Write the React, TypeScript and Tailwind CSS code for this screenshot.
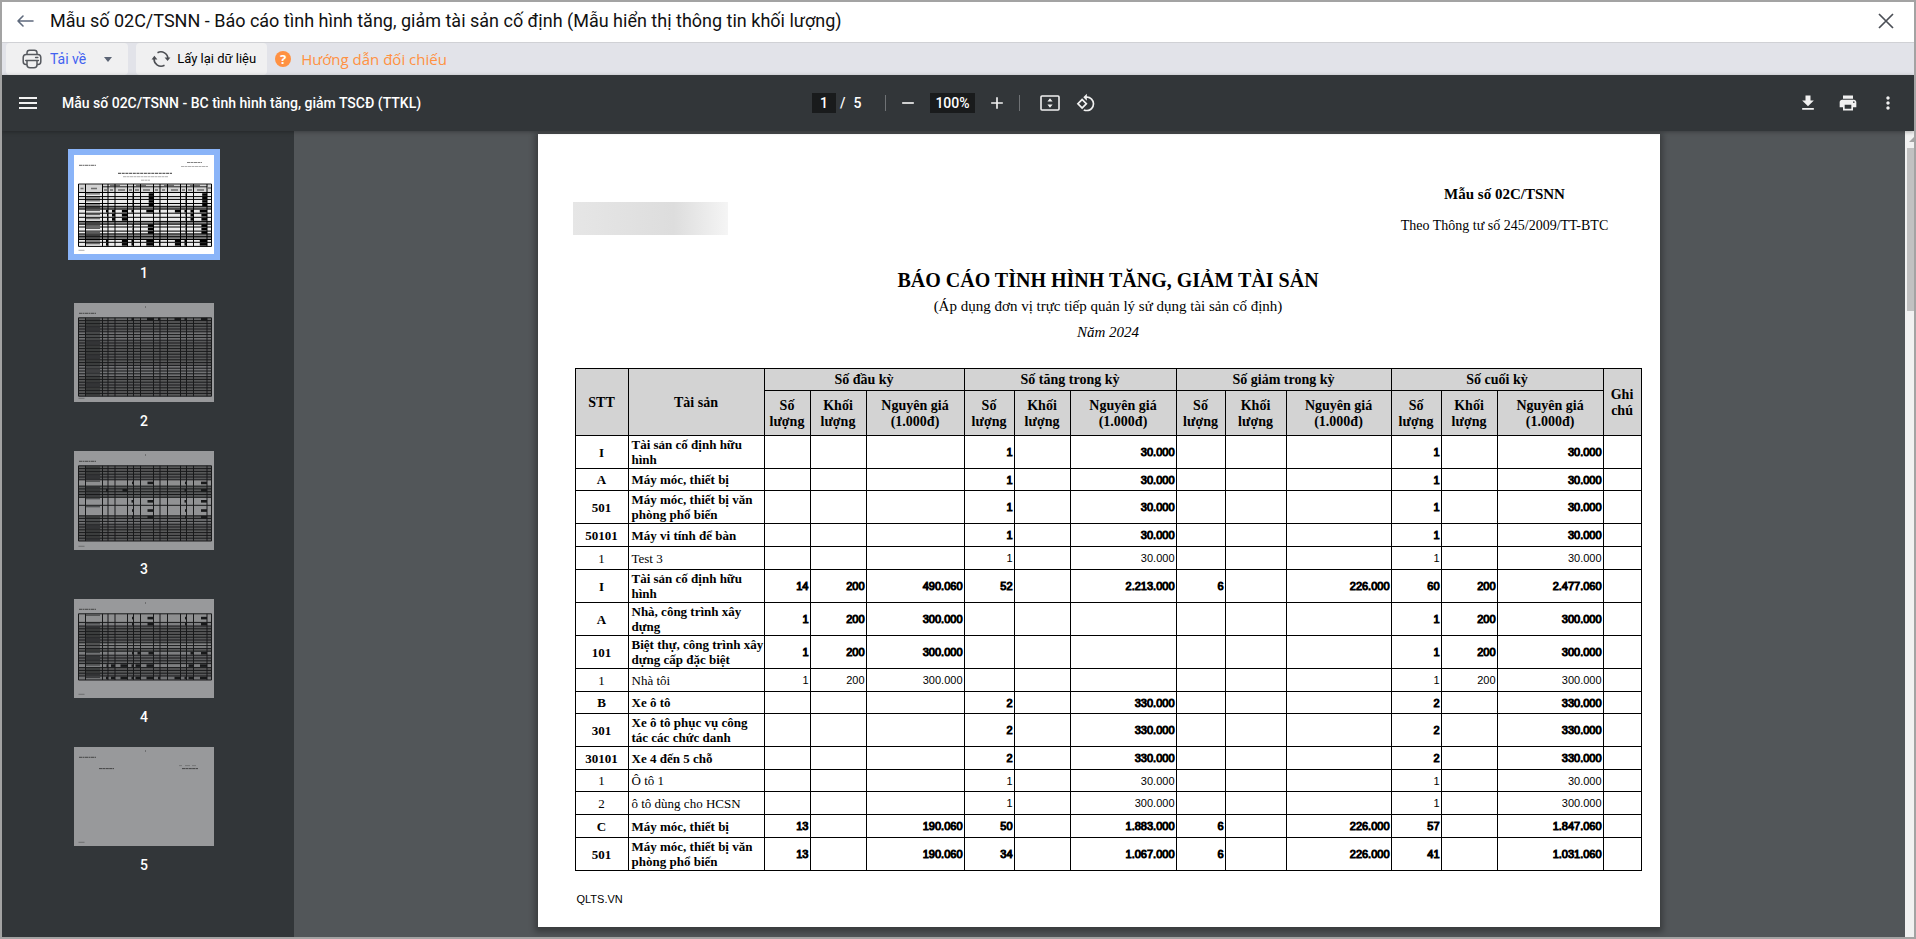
import {
  MdAdd,
  MdDownload,
  MdMenu,
  MdMoreVert,
  MdPrint,
  MdRemove,
  MdRotate90DegreesCcw,
} from 'react-icons/md';
import clsx from 'clsx';

interface AssetRow {
  code: string;
  name: string;
  bold?: boolean;
  size: 'sm' | 'md' | 'lg';
  // opening, increase, decrease, closing: quantity / volume / cost
  values: string[];
}

const GROUPS = ['Số đầu kỳ', 'Số tăng trong kỳ', 'Số giảm trong kỳ', 'Số cuối kỳ'];

const ROWS: AssetRow[] = [
  { code: 'I', name: 'Tài sản cố định hữu hình', bold: true, size: 'lg', values: ['', '', '', '1', '', '30.000', '', '', '', '1', '', '30.000'] },
  { code: 'A', name: 'Máy móc, thiết bị', bold: true, size: 'sm', values: ['', '', '', '1', '', '30.000', '', '', '', '1', '', '30.000'] },
  { code: '501', name: 'Máy móc, thiết bị văn phòng phổ biến', bold: true, size: 'lg', values: ['', '', '', '1', '', '30.000', '', '', '', '1', '', '30.000'] },
  { code: '50101', name: 'Máy vi tính để bàn', bold: true, size: 'md', values: ['', '', '', '1', '', '30.000', '', '', '', '1', '', '30.000'] },
  { code: '1', name: 'Test 3', size: 'md', values: ['', '', '', '1', '', '30.000', '', '', '', '1', '', '30.000'] },
  { code: 'I', name: 'Tài sản cố định hữu hình', bold: true, size: 'lg', values: ['14', '200', '490.060', '52', '', '2.213.000', '6', '', '226.000', '60', '200', '2.477.060'] },
  { code: 'A', name: 'Nhà, công trình xây dựng', bold: true, size: 'lg', values: ['1', '200', '300.000', '', '', '', '', '', '', '1', '200', '300.000'] },
  { code: '101', name: 'Biệt thự, công trình xây dựng cấp đặc biệt', bold: true, size: 'lg', values: ['1', '200', '300.000', '', '', '', '', '', '', '1', '200', '300.000'] },
  { code: '1', name: 'Nhà tôi', size: 'md', values: ['1', '200', '300.000', '', '', '', '', '', '', '1', '200', '300.000'] },
  { code: 'B', name: 'Xe ô tô', bold: true, size: 'sm', values: ['', '', '', '2', '', '330.000', '', '', '', '2', '', '330.000'] },
  { code: '301', name: 'Xe ô tô phục vụ công tác các chức danh', bold: true, size: 'lg', values: ['', '', '', '2', '', '330.000', '', '', '', '2', '', '330.000'] },
  { code: '30101', name: 'Xe 4 đến 5 chỗ', bold: true, size: 'md', values: ['', '', '', '2', '', '330.000', '', '', '', '2', '', '330.000'] },
  { code: '1', name: 'Ô tô 1', size: 'sm', values: ['', '', '', '1', '', '30.000', '', '', '', '1', '', '30.000'] },
  { code: '2', name: 'ô tô dùng cho HCSN', size: 'md', values: ['', '', '', '1', '', '300.000', '', '', '', '1', '', '300.000'] },
  { code: 'C', name: 'Máy móc, thiết bị', bold: true, size: 'md', values: ['13', '', '190.060', '50', '', '1.883.000', '6', '', '226.000', '57', '', '1.847.060'] },
  { code: '501', name: 'Máy móc, thiết bị văn phòng phổ biến', bold: true, size: 'lg', values: ['13', '', '190.060', '34', '', '1.067.000', '6', '', '226.000', '41', '', '1.031.060'] },
];

const ROW_HEIGHT = { sm: 'h-[22px]', md: 'h-[23px]', lg: 'h-[33px]' };

function BackIcon() {
  return (
    <svg viewBox="0 0 18 14" className="w-[18px] h-[14px]" fill="none" stroke="#5f6a7d" strokeWidth="1.6">
      <path d="M17 7H2M7 2L2 7l5 5" strokeLinecap="round" strokeLinejoin="round" />
    </svg>
  );
}

function CloseIcon() {
  return (
    <svg viewBox="0 0 16 16" className="size-4" fill="none" stroke="#4b4f56" strokeWidth="1.7">
      <path d="M1 1l14 14M15 1L1 15" />
    </svg>
  );
}

function PrinterIcon() {
  return (
    <svg viewBox="0 0 20 20" className="size-5" fill="none" stroke="#55585e" strokeWidth="1.5" strokeLinejoin="round">
      <path d="M5 5.5V3.8Q5 1.2 7.6 1.2h4.8Q15 1.2 15 3.8v1.7" />
      <path d="M5 15.5H4Q1.2 15.5 1.2 12.5V8.6Q1.2 5.5 4.2 5.5h11.6Q18.8 5.5 18.8 8.6v3.9q0 3-2.8 3h-1" />
      <path d="M3.8 11.5h12.6M13.6 8.5h2.2" strokeLinecap="round" />
      <path d="M5 11.5v4.3Q5 18.8 8 18.8h4q3 0 3-3v-4.3" />
    </svg>
  );
}

function ReloadIcon() {
  return (
    <svg viewBox="0 0 20 18" className="w-5 h-[18px]" fill="none" stroke="#4b4d52" strokeWidth="1.6">
      <path d="M6.5 2.7A7 7 0 0 1 16.9 9" />
      <path d="M13.5 15.3A7 7 0 0 1 3.1 8.6" />
      <path d="M13.6 7.6h5.8L16.6 11z" fill="#4b4d52" stroke="none" />
      <path d="M.6 9.6h5.8L3.4 5.8z" fill="#4b4d52" stroke="none" />
    </svg>
  );
}

function FitPageIcon() {
  return (
    <svg viewBox="0 0 20 16" className="w-5 h-4">
      <rect x="1" y="1" width="18" height="14" rx="1" fill="none" stroke="#f1f1f1" strokeWidth="1.6" />
      <path d="M10 3.2l2.6 3.2H7.4zM10 12.8l2.6-3.2H7.4z" fill="#f1f1f1" />
    </svg>
  );
}

// Column lines of the report table at thumbnail scale
const THUMB_COLS = [4.5, 11.5, 28.5, 34, 41, 53.5, 59.5, 66.5, 79.5, 86, 93.5, 106.5, 112.5, 119.5, 133, 137.5];

interface ThumbRow {
  h: number;
  shade: number;
  // [column index, width]
  marks?: number[][];
}

const line = (count: number, shade = 0.45): ThumbRow[] => Array.from({ length: count }, () => ({ h: 2.8, shade }));

const FIRST_PAGE: ThumbRow[] = ROWS.map((row) => ({
  h: row.size === 'lg' ? 4.1 : 2.8,
  shade: row.bold ? 0.08 : 0.5,
  marks: row.bold
    ? row.values.map((v, i) => [i + 3, v.length > 3 ? v.length * 0.8 : v.length]).filter((m) => m[1] > 0)
    : [],
}));

const PAGES: { top: number; rows: ThumbRow[] }[] = [
  { top: 37.5, rows: FIRST_PAGE },
  {
    top: 14.8,
    rows: [
      { h: 2.8, shade: 0.4, marks: [[6, 2], [8, 6.5], [9, 2], [11, 6], [12, 2], [14, 6]] },
      ...line(4, 0.5), ...line(3, 0.3), ...line(9, 0.5), ...line(4, 0.3), ...line(7, 0.5),
    ],
  },
  {
    top: 14.8,
    rows: [
      ...line(5, 0.5),
      { h: 6.3, shade: 0.08, marks: [[6, 1.5], [8, 6], [12, 1.5], [14, 6]] },
      ...line(1, 0.5),
      { h: 2.8, shade: 0.5, marks: [[3, 2], [5, 5], [12, 2], [14, 6]] },
      ...line(2, 0.5),
      { h: 8, shade: 0.05, marks: [[6, 2], [8, 6], [12, 2], [14, 6]] },
      { h: 10.5, shade: 0.05, marks: [[6, 1.5], [8, 6], [12, 1.5], [14, 6]] },
      { h: 2.8, shade: 0.5, marks: [[6, 1.5], [8, 6], [12, 1.5], [14, 6]] },
      ...line(2, 0.3), ...line(6, 0.5),
    ],
  },
  {
    top: 14.8,
    rows: [
      { h: 8.6, shade: 0.08, marks: [[6, 1.5], [8, 6], [12, 1.5], [14, 6]] },
      { h: 3.6, shade: 0.2, marks: [[6, 1.5], [8, 6], [12, 1.5], [14, 6]] },
      ...line(6, 0.5), ...line(2, 0.15), ...line(1, 0.5),
      { h: 4, shade: 0.2, marks: [[6, 1.5], [7, 3], [8, 5], [13, 3], [14, 6]] },
      ...line(3, 0.45),
      { h: 4, shade: 0.2, marks: [[3, 1.5], [4, 4], [5, 7], [6, 2], [7, 5], [8, 7], [13, 5], [14, 7]] },
      ...line(3, 0.5),
      { h: 4, shade: 0.3, marks: [[3, 2], [4, 4], [5, 7], [6, 2], [7, 5], [8, 7], [9, 2], [11, 6], [12, 2], [13, 5], [14, 7]] },
    ],
  },
  { top: 0, rows: [] },
];

function Thumbnail({ index }: { index: number }) {
  const { top, rows } = PAGES[index];
  const active = index === 0;
  let y = top;
  const placed = rows.map((row) => {
    const item = { ...row, y };
    y += row.h;
    return item;
  });
  const tableTop = active ? 29 : top;

  return (
    <svg viewBox="0 0 140 99" className="block w-[140px] h-[99px]">
      <rect width="140" height="99" fill={active ? '#ffffff' : '#98999b'} />
      <g stroke="#222" strokeWidth="1" opacity="0.7">
        <path d="M5 10.3h17" strokeDasharray="3 0.5 2 0.5" />
        <path d="M4.5 95.3h6" opacity="0.5" />
        {active && (
          <>
            <path d="M113 7.5h15" opacity="0.8" strokeDasharray="3 0.5" />
            <path d="M107 11.5h27" opacity="0.5" strokeDasharray="3 0.5" />
            <path d="M44 18.4h54" strokeWidth="1.4" strokeDasharray="3 0.7" />
            <path d="M49 21.7h45M67 25.2h9" opacity="0.5" strokeDasharray="3 0.5" />
          </>
        )}
        {!active && <path d="M71 4h1" />}
        {rows.length === 0 && (
          <>
            <path d="M25 21.6h15M108 21.6h16" strokeDasharray="3 0.4" />
            <path d="M105 18.6h3M111 18.6h5M118 18.6h4" opacity="0.4" />
          </>
        )}
      </g>
      {active && (
        <>
          <rect x="4.5" y="29" width="133" height="8.5" fill="#d3d3d3" />
          <path d="M4.5 29H137.5M28.5 31.8H133" stroke="#222" strokeWidth="1" />
          <path
            d="M6.5 33.5h3M17 33.5h6M36 30.5h10M62 30.5h10M90 30.5h10M116 30.5h10M30 35h3M36 35h3M44 35h7M55 35h3M61 35h4M69 35h7M81 35h3M88 35h3M97 35h7M108 35h3M114 35h4M123 35h7M134 33h3"
            stroke="#444"
            strokeWidth="1.4"
            opacity="0.7"
          />
        </>
      )}
      {placed.map((row, i) => (
        <g key={i} fill={active ? '#000' : '#18191a'}>
          <rect x="4.5" y={row.y} width="133" height={row.h} opacity={row.shade} />
          <rect x="12" y={row.y + 0.8} width="14" height="1.2" opacity="0.6" />
          <rect x="4.5" y={row.y - 0.5} width="133" height="1" />
          {row.marks?.map(([col, w]) => (
            <rect key={col} x={THUMB_COLS[col] - w} y={row.y + row.h / 2 - 1.3} width={w} height="2.6" />
          ))}
        </g>
      ))}
      {rows.length > 0 && (
        <g fill={active ? '#000' : '#18191a'}>
          <rect x="4.5" y={y - 0.5} width="133" height="1" />
          {THUMB_COLS.map((x) => (
            <rect key={x} x={x - 0.5} y={tableTop} width="1" height={y - tableTop} />
          ))}
        </g>
      )}
    </svg>
  );
}

function ReportTable() {
  const cell = 'border border-black';
  const head = 'border border-black pt-px';
  return (
    <table className="w-full table-fixed border-collapse text-[12px] leading-[15px]">
      <colgroup>
        <col className="w-[53px]" />
        <col className="w-[136px]" />
        <col className="w-[46px]" />
        <col className="w-[56px]" />
        <col className="w-[98px]" />
        <col className="w-[50px]" />
        <col className="w-[56px]" />
        <col className="w-[106px]" />
        <col className="w-[49px]" />
        <col className="w-[61px]" />
        <col className="w-[105px]" />
        <col className="w-[50px]" />
        <col className="w-[56px]" />
        <col className="w-[106px]" />
        <col />
      </colgroup>
      <thead className="bg-[#d3d3d3] text-[14px] leading-4">
        <tr className="h-[22px]">
          <th rowSpan={2} className={head}>STT</th>
          <th rowSpan={2} className={head}>Tài sản</th>
          {GROUPS.map((group) => (
            <th key={group} colSpan={3} className={head}>{group}</th>
          ))}
          <th rowSpan={2} className={head}>Ghi chú</th>
        </tr>
        <tr className="h-[45px]">
          {GROUPS.map((group) => [
            <th key={`${group}-qty`} className={head}>Số lượng</th>,
            <th key={`${group}-vol`} className={head}>Khối lượng</th>,
            <th key={`${group}-cost`} className={head}>Nguyên giá (1.000đ)</th>,
          ])}
        </tr>
      </thead>
      <tbody>
        {ROWS.map((row, i) => (
          <tr key={i} className={ROW_HEIGHT[row.size]}>
            <td className={clsx(cell, 'text-center text-[13px]', row.bold && 'font-bold')}>{row.code}</td>
            <td className={clsx(cell, 'pl-[3px] text-[13px]', row.bold && 'font-bold')}>{row.name}</td>
            {row.values.map((value, j) => (
              <td
                key={j}
                className={clsx(
                  cell,
                  "pt-px pr-px text-right text-[11px] font-['Liberation_Sans',Arial,sans-serif]",
                  row.bold && '[-webkit-text-stroke:1px_black]',
                )}
              >
                {value}
              </td>
            ))}
            <td className={cell} />
          </tr>
        ))}
      </tbody>
    </table>
  );
}

export default function App() {
  const iconButton = 'flex size-9 items-center justify-center rounded-full text-[#f1f1f1]';

  return (
    <div className="flex h-screen flex-col overflow-hidden border-2 border-[#a3a3a3] bg-white font-['Roboto',sans-serif]">
      <header className="flex h-[41px] shrink-0 items-center border-b border-[#d0d1d5] pb-0.5 pl-3.5 pr-5">
        <button aria-label="Back" className="mr-4">
          <BackIcon />
        </button>
        <h1 className="flex-1 text-lg leading-6 text-[#111]">
          Mẫu số 02C/TSNN - Báo cáo tình hình tăng, giảm tài sản cố định (Mẫu hiển thị thông tin khối lượng)
        </h1>
        <button aria-label="Close">
          <CloseIcon />
        </button>
      </header>

      <div className="flex h-8 shrink-0 bg-[#e2e3e9] pl-1">
        <button className="flex items-center rounded bg-[#f0f0f1] px-4 text-sm text-[#4262f0]">
          <PrinterIcon />
          <span className="ml-2">Tải về</span>
          <svg viewBox="0 0 8 5" className="ml-[18px] h-[5px] w-2">
            <path d="M0 0h8L4 5z" fill="#5b6475" />
          </svg>
        </button>
        <button className="ml-2 flex items-center rounded bg-[#f0f0f1] pl-[15px] pr-[11px] text-[13px] text-black">
          <ReloadIcon />
          <span className="ml-1.5">Lấy lại dữ liệu</span>
        </button>
        <a href="#guide" className="ml-2 flex items-center font-['Open_Sans',sans-serif] text-[15px] text-[#ff9142]">
          <span className="mr-2.5 flex size-4 items-center justify-center rounded-full bg-[#ff9142] text-[13px] font-bold leading-4 text-white">
            ?
          </span>
          Hướng dẫn đối chiếu
        </a>
      </div>

      <div className="relative z-10 flex h-14 shrink-0 items-center bg-[#323639] text-sm font-medium text-white shadow-[0_1px_4px_rgba(0,0,0,0.3)]">
        <div className="flex flex-1 items-center pl-2">
          <button aria-label="Menu" className={iconButton}>
            <MdMenu className="size-6" />
          </button>
          <span className="ml-4">Mẫu số 02C/TSNN - BC tình hình tăng, giảm TSCĐ (TTKL)</span>
        </div>
        <div className="flex items-center">
          <input aria-label="Page" defaultValue="1" className="h-5 w-6 bg-[#191b1c] text-center" />
          <span className="flex w-[49px] gap-2 pl-1">
            <span>/</span>
            <span>5</span>
          </span>
          <span className="mr-1 h-4 w-px bg-[#6f7275]" />
          <button aria-label="Zoom out" className={iconButton}>
            <MdRemove className="size-5" />
          </button>
          <input aria-label="Zoom" defaultValue="100%" className="mx-1 h-5 w-[45px] bg-[#191b1c] text-center" />
          <button aria-label="Zoom in" className={iconButton}>
            <MdAdd className="size-5" />
          </button>
          <span className="ml-1 mr-3 h-4 w-px bg-[#6f7275]" />
          <button aria-label="Fit to page" className={iconButton}>
            <FitPageIcon />
          </button>
          <button aria-label="Rotate" className={iconButton}>
            <MdRotate90DegreesCcw className="size-5" />
          </button>
        </div>
        <div className="flex flex-1 justify-end gap-1 pr-2">
          <button aria-label="Download" className={iconButton}>
            <MdDownload className="size-5" />
          </button>
          <button aria-label="Print" className={iconButton}>
            <MdPrint className="size-5" />
          </button>
          <button aria-label="More" className={iconButton}>
            <MdMoreVert className="size-5" />
          </button>
        </div>
      </div>

      <div className="flex min-h-0 flex-1">
        <aside className="flex w-[292px] shrink-0 flex-col items-center overflow-hidden bg-[#323639] pr-2 pt-[18px]">
          {PAGES.map((_, i) => (
            <button key={i} className="flex h-[148px] shrink-0 flex-col items-center text-sm font-medium leading-5 text-white">
              <span className={clsx('border-[6px]', i === 0 ? 'border-[#8ab4f8]' : 'border-transparent')}>
                <Thumbnail index={i} />
              </span>
              <span className="mt-[3px]">{i + 1}</span>
            </button>
          ))}
        </aside>

        <main className="min-w-0 flex-1 overflow-hidden bg-[#525659] pr-0.5 pt-[3px]">
          <article className="mx-auto flex h-[793px] w-[1122px] flex-col bg-white pl-[37px] pr-[18px] font-['Liberation_Serif','Times_New_Roman',serif] text-black shadow-[0_2px_6px_3px_rgba(0,0,0,0.3)]">
            <div className="flex justify-between pt-12">
              <div className="mt-5 -ml-0.5 h-[33px] w-[155px] bg-linear-to-r from-[#e6e6e6] via-[#dddddd] via-65% to-[#f5f5f5]" />
              <div className="w-[274px] text-center">
                <p className="text-[15px] font-bold leading-6">Mẫu số 02C/TSNN</p>
                <p className="mt-2 text-sm leading-6">Theo Thông tư số 245/2009/TT-BTC</p>
              </div>
            </div>
            <div className="mt-7 text-center">
              <h2 className="text-xl font-bold leading-7">BÁO CÁO TÌNH HÌNH TĂNG, GIẢM TÀI SẢN</h2>
              <p className="text-[15px] leading-6">(Áp dụng đơn vị trực tiếp quản lý sử dụng tài sản cố định)</p>
              <p className="mb-[22px] text-[15px] italic leading-7">Năm 2024</p>
            </div>
            <ReportTable />
            <p className="mt-5 pl-0.5 font-['Liberation_Sans',Arial,sans-serif] text-[11px] leading-4">QLTS.VN</p>
          </article>
        </main>

        {/* scrollbar */}
        <div className="flex w-[9px] shrink-0 flex-col bg-[#f1f1f1] pl-0.5">
          <svg viewBox="0 0 7 17" className="h-[17px] w-[7px]">
            <path d="M2 11l5-5v5z" fill="#a3a3a3" />
          </svg>
          <div className="h-[163px] bg-[#c1c1c1]" />
        </div>
      </div>
    </div>
  );
}
